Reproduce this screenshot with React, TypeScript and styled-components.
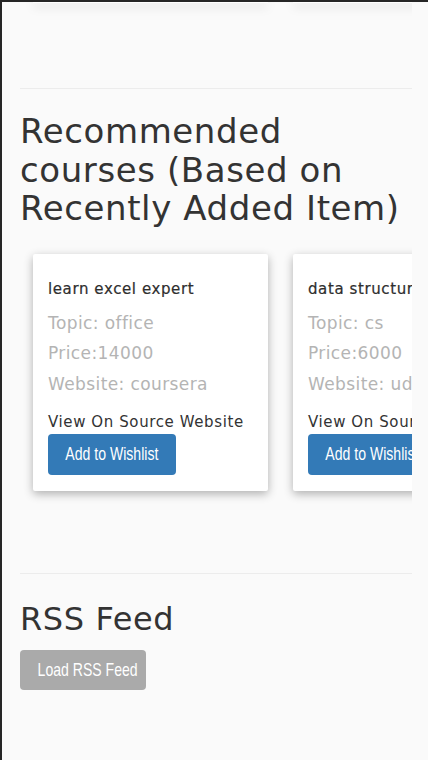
import React from "react";
import styled, { createGlobalStyle } from "styled-components";

const GlobalStyle = createGlobalStyle`
  html, body {
    margin: 0;
    padding: 0;
    background: #fafafa;
  }
  body {
    font-family: "DejaVu Sans", "Open Sans", sans-serif;
    color: #333;
  }
  * { box-sizing: border-box; }
`;

const Frame = styled.div`
  min-height: 760px;
  border-left: 2px solid #262626;
  border-top: 2px solid #262626;
  padding: 0 16px 0 18px;
  background: #fafafa;
`;

const Scroller = styled.div<{ $stub?: boolean }>`
  display: flex;
  gap: 25px;
  overflow: hidden;
  padding: ${(p) => (p.$stub ? "0 0 20px 13px" : "26px 0 20px 13px")};
`;

const StubCard = styled.div`
  flex: 0 0 235px;
  height: 1px;
  background: #fff;
  box-shadow: 0 3px 10px rgba(0, 0, 0, 0.4);
`;

const Rule = styled.hr<{ $top: number }>`
  border: 0;
  border-top: 1px solid #ececec;
  margin: ${(p) => p.$top}px 0 0;
`;

const Heading = styled.h2<{ $size: number; $top: number }>`
  font-family: "DejaVu Sans", "Open Sans", sans-serif;
  font-weight: 400;
  font-size: ${(p) => p.$size}px;
  letter-spacing: 0.6px;
  line-height: 38.5px;
  color: #333;
  margin: ${(p) => p.$top}px 0 0;
`;

const Card = styled.div`
  flex: 0 0 235px;
  height: 237px;
  background: #fff;
  border-radius: 2px;
  box-shadow: 0 3px 10px rgba(0, 0, 0, 0.3);
  padding: 24px 15px 16px;
  display: flex;
  flex-direction: column;
  white-space: nowrap;
`;

const Title = styled.div`
  font-size: 15px;
  letter-spacing: 0.6px;
  line-height: 22px;
  color: #2e2e2e;
  margin-bottom: 8px;
  -webkit-text-stroke: 0.2px #2e2e2e;
`;

const Detail = styled.div`
  font-size: 17px;
  letter-spacing: 0.4px;
  line-height: 30.5px;
  color: #b4b4b4;
`;

const SourceLink = styled.a`
  font-size: 15px;
  letter-spacing: 0.6px;
  line-height: 22px;
  color: #333;
  margin-top: 11.5px;
  text-decoration: none;
`;

const Button = styled.button<{ $tone: "primary" | "muted"; $width: number }>`
  align-self: flex-start;
  width: ${(p) => p.$width}px;
  height: 41px;
  padding: 0;
  border: 0;
  border-radius: 4px;
  background: ${(p) => (p.$tone === "primary" ? "#337ab7" : "#aaaaaa")};
  color: #fff;
  font-family: "Liberation Sans", Arial, sans-serif;
  font-size: 19px;
  white-space: nowrap;
  overflow: hidden;
  margin-top: 1px;
  cursor: pointer;
`;

const Narrow = styled.span`
  display: inline-block;
  transform: scaleX(0.74);
  transform-origin: center;
`;

const RssButton = styled(Button)`
  height: 40px;
  margin-top: 12px;
`;

const courses = [
  { title: "learn excel expert", topic: "office", price: "14000", site: "coursera" },
  { title: "data structures", topic: "cs", price: "6000", site: "udemy" },
];

export default function App() {
  return (
    <>
      <GlobalStyle />
      <Frame>
        <Scroller $stub>
          <StubCard />
          <StubCard />
        </Scroller>
        <Rule $top={65} />
        <Heading $size={34} $top={23}>
          Recommended courses (Based on Recently Added Item)
        </Heading>
        <Scroller>
          {courses.map((c) => (
            <Card key={c.title}>
              <Title>{c.title}</Title>
              <Detail>Topic: {c.topic}</Detail>
              <Detail>Price:{c.price}</Detail>
              <Detail>Website: {c.site}</Detail>
              <SourceLink href="#">View On Source Website</SourceLink>
              <Button $tone="primary" $width={128}>
                <Narrow>Add to Wishlist</Narrow>
              </Button>
            </Card>
          ))}
        </Scroller>
        <Rule $top={62} />
        <Heading $size={32} $top={26}>
          RSS Feed
        </Heading>
        <RssButton $tone="muted" $width={126}>
          <Narrow>Load RSS Feed</Narrow>
        </RssButton>
      </Frame>
    </>
  );
}
